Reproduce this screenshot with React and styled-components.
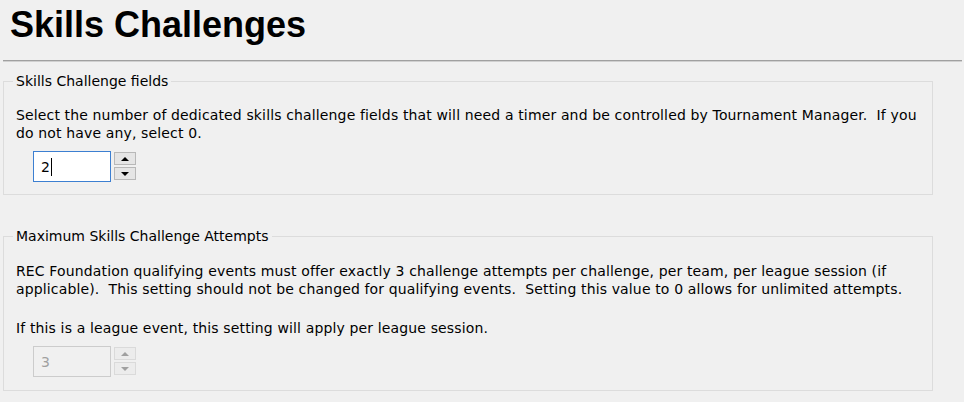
import React from "react";
import styled, { createGlobalStyle } from "styled-components";

const GlobalStyle = createGlobalStyle`
  html, body {
    margin: 0;
    padding: 0;
    background: #f0f0f0;
  }
  body {
    font-family: "DejaVu Sans", "Liberation Sans", sans-serif;
    color: #000;
  }
`;

const Page = styled.div`
  width: 964px;
  height: 402px;
  overflow: hidden;
  background: #f0f0f0;
`;

const Title = styled.h1`
  margin: 0;
  padding: 4px 0 0 10px;
  font-family: "Liberation Sans", Arial, sans-serif;
  font-weight: bold;
  font-size: 36px;
  line-height: 41px;
`;

const Rule = styled.div`
  margin: 15px 2px 0 3px;
  height: 0;
  border-top: 1px solid #a0a0a0;
  border-bottom: 1px solid #d0d0d0;
`;

const GroupBox = styled.fieldset`
  box-sizing: border-box;
  width: 930px;
  margin: ${props => props.top}px 0 0 3px;
  padding: 0 12px ${props => props.bottom}px;
  border: 1px solid #dcdcdc;
  border-radius: 0;
  min-width: 0;
`;

const Legend = styled.legend`
  margin-left: -3px;
  padding: 0 3px;
  font-size: 14px;
  line-height: 16px;
`;

const Para = styled.p`
  margin: ${props => props.top || 0}px 0 0;
  font-size: 14px;
  line-height: 18px;
  letter-spacing: 0.14px;
  white-space: nowrap;
`;

const SpinRow = styled.div`
  display: flex;
  align-items: flex-start;
  gap: 3px;
  margin: ${props => props.top}px 0 0 17px;
`;

const NumberBox = styled.div`
  box-sizing: border-box;
  width: 78px;
  height: 31px;
  display: flex;
  align-items: center;
  padding-left: 7px;
  font-size: 14px;
  background: ${props => (props.disabled ? "#f0f0f0" : "#fff")};
  color: ${props => (props.disabled ? "#a0a0a0" : "#000")};
  border: 1px solid ${props => (props.disabled ? "#cccccc" : "#3c7fd1")};
`;

const Caret = styled.span`
  display: inline-block;
  width: 1px;
  height: 18px;
  margin-left: 1px;
  background: #000;
`;

const SpinButtons = styled.div`
  display: flex;
  flex-direction: column;
  gap: 2px;
  padding-top: 1px;
`;

const SpinButton = styled.div`
  box-sizing: border-box;
  width: 22px;
  height: 13px;
  display: flex;
  align-items: center;
  justify-content: center;
  background: ${props => (props.disabled ? "#ececec" : "#e5e5e5")};
  border: 1px solid ${props => (props.disabled ? "#dadada" : "#b8b8b8")};
`;

const Arrow = ({ up, color }) => (
  <svg width="8" height="4" viewBox="0 0 8 4">
    <polygon points={up ? "0,4 8,4 4,0" : "0,0 8,0 4,4"} fill={color} />
  </svg>
);

const Spinner = ({ value, disabled, top }) => {
  const color = disabled ? "#a0a0a0" : "#000";
  return (
    <SpinRow top={top}>
      <NumberBox disabled={disabled}>
        {value}
        {!disabled && <Caret />}
      </NumberBox>
      <SpinButtons>
        <SpinButton disabled={disabled}>
          <Arrow up color={color} />
        </SpinButton>
        <SpinButton disabled={disabled}>
          <Arrow color={color} />
        </SpinButton>
      </SpinButtons>
    </SpinRow>
  );
};

export default function App() {
  return (
    <Page>
      <GlobalStyle />
      <Title>Skills Challenges</Title>
      <Rule />

      <GroupBox top={11} bottom={12}>
        <Legend>Skills Challenge fields</Legend>
        <Para top={17}>
          Select the number of dedicated skills challenge fields that will need a timer and be
          controlled by Tournament Manager.&nbsp; If you
          <br />
          do not have any, select 0.
        </Para>
        <Spinner value="2" top={9} />
      </GroupBox>

      <GroupBox top={33} bottom={13}>
        <Legend>Maximum Skills Challenge Attempts</Legend>
        <Para top={18}>
          REC Foundation qualifying events must offer exactly 3 challenge attempts per challenge,
          per team, per league session (if
          <br />
          applicable).&nbsp; This setting should not be changed for qualifying events.&nbsp;
          Setting this value to 0 allows for unlimited attempts.
        </Para>
        <Para top={21}>If this is a league event, this setting will apply per league session.</Para>
        <Spinner value="3" disabled top={9} />
      </GroupBox>
    </Page>
  );
}
